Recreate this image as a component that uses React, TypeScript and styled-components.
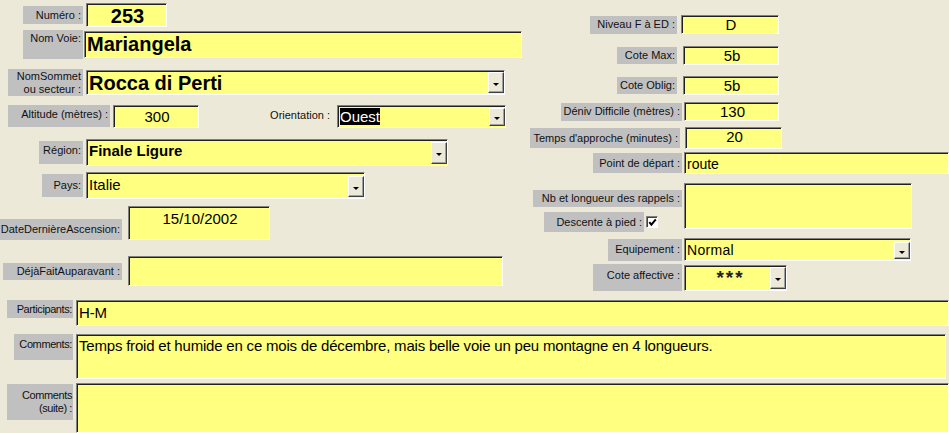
import React from "react";
import styled, { createGlobalStyle, css } from "styled-components";

const GlobalStyle = createGlobalStyle`
  html, body { margin: 0; padding: 0; background: #ece9d8; }
  body { overflow: hidden; }
`;

const Form = styled.div`
  width: 949px;
  height: 433px;
  overflow: hidden;
  display: flex;
  flex-direction: column;
  background: #ece9d8;
  font-family: "Liberation Sans", Arial, sans-serif;
  color: #000;
`;

const Top = styled.div`
  display: flex;
  height: 295px;
`;

const LeftCol = styled.div`
  width: 525px;
  display: flex;
  flex-direction: column;
`;

const RightCol = styled.div`
  flex: 1;
  display: flex;
  flex-direction: column;
`;

const Bottom = styled.div`
  display: flex;
  flex-direction: column;
  margin-top: 8px;
`;

const Row = styled.div<{ $mt?: number; $pl?: number; $align?: string }>`
  display: flex;
  align-items: ${(p) => p.$align ?? "center"};
  margin-top: ${(p) => p.$mt ?? 0}px;
  padding-left: ${(p) => p.$pl ?? 0}px;
  flex-shrink: 0;
`;

const Label = styled.div<{
  $w: number;
  $h: number;
  $ml?: number;
  $mt?: number;
  $pt?: number;
  $center?: boolean;
  $narrow?: boolean;
}>`
  box-sizing: border-box;
  width: ${(p) => p.$w}px;
  height: ${(p) => p.$h}px;
  margin-left: ${(p) => p.$ml ?? 0}px;
  margin-top: ${(p) => p.$mt ?? 0}px;
  flex-shrink: 0;
  background: #c0c0c0;
  display: flex;
  justify-content: flex-end;
  align-items: ${(p) => (p.$center ? "center" : "flex-start")};
  text-align: right;
  padding: ${(p) => (p.$center ? "0 2px" : `${p.$pt ?? 3}px 2px 0`)};
  font-size: 11px;
  line-height: 13px;
  color: #111;
  white-space: pre-line;
  ${(p) =>
    p.$narrow &&
    css`
      letter-spacing: -0.4px;
      padding-right: 1px;
    `}
`;

const PlainLabel = styled.div<{ $w: number; $ml?: number }>`
  width: ${(p) => p.$w}px;
  margin-left: ${(p) => p.$ml ?? 0}px;
  flex-shrink: 0;
  text-align: right;
  font-size: 11px;
  line-height: 13px;
  color: #111;
  padding-top: 4px;
`;

const Field = styled.div<{
  $w: number;
  $h: number;
  $ml?: number;
  $pt?: number;
  $size?: number;
  $bold?: boolean;
  $narrow?: boolean;
}>`
  box-sizing: border-box;
  width: ${(p) => p.$w}px;
  height: ${(p) => p.$h}px;
  margin-left: ${(p) => p.$ml ?? 0}px;
  flex-shrink: 0;
  background: #ffff80;
  border-top: 1px solid #808080;
  border-left: 1px solid #808080;
  border-bottom: 1px solid #ffffff;
  border-right: 1px solid #ffffff;
  box-shadow: inset 1px 1px 0 #202020;
  display: flex;
  align-items: flex-start;
  padding: ${(p) => p.$pt ?? 1}px 0 0 2px;
  font-size: ${(p) => p.$size ?? 14}px;
  font-weight: ${(p) => (p.$bold ? 700 : 400)};
  line-height: 1.15;
  color: #000;
  overflow: hidden;
  white-space: nowrap;
  ${(p) =>
    p.$narrow &&
    css`
      letter-spacing: -0.2px;
    `}
`;

const Value = styled.span<{ $center?: boolean; $spaced?: boolean }>`
  flex: 1;
  text-align: ${(p) => (p.$center ? "center" : "left")};
  letter-spacing: ${(p) => (p.$spaced ? "0.3px" : "inherit")};
`;

const Selected = styled.span`
  background: #000;
  color: #fff;
`;

const DropButton = styled.div`
  box-sizing: border-box;
  width: 16px;
  align-self: stretch;
  margin-bottom: 1px;
  flex-shrink: 0;
  background: #ece9d8;
  border-top: 1px solid #ffffff;
  border-left: 1px solid #ffffff;
  border-bottom: 1px solid #404040;
  border-right: 1px solid #404040;
  box-shadow: inset -1px -1px 0 #a0a0a0;
  display: flex;
  align-items: center;
  justify-content: center;
`;

const Arrow = styled.span`
  width: 0;
  height: 0;
  margin-top: 3px;
  border-left: 3px solid transparent;
  border-right: 3px solid transparent;
  border-top: 3px solid #000;
`;

const LabelStack = styled.div<{ $w: number }>`
  width: ${(p) => p.$w}px;
  flex-shrink: 0;
  display: flex;
  flex-direction: column;
  align-items: flex-end;
`;

const CheckRow = styled.div`
  display: flex;
  align-items: center;
  margin-top: 5px;
  margin-right: 24px;
`;

const CheckBox = styled.div`
  box-sizing: border-box;
  width: 12px;
  height: 12px;
  margin-left: 2px;
  background: #fff;
  border-top: 1px solid #808080;
  border-left: 1px solid #808080;
  border-bottom: 1px solid #fff;
  border-right: 1px solid #fff;
  box-shadow: inset 1px 1px 0 #404040;
  display: flex;
  align-items: center;
  justify-content: center;
`;

const Stars = styled.span`
  flex: 1;
  text-align: center;
  font-family: "Liberation Mono", monospace;
  font-weight: 700;
  font-size: 19px;
  letter-spacing: -2px;
  color: #222;
  padding-top: 2px;
`;

const Combo: React.FC<{ children: React.ReactNode }> = ({ children }) => (
  <>
    {children}
    <DropButton>
      <Arrow />
    </DropButton>
  </>
);

export default function App() {
  return (
    <>
      <GlobalStyle />
      <Form>
        <Top>
          <LeftCol>
            <Row $mt={3} $pl={23}>
              <Label $w={60} $h={18} $center>Numéro :</Label>
              <Field $w={81} $h={24} $ml={3} $size={20} $bold>
                <Value $center>253</Value>
              </Field>
            </Row>
            <Row $mt={3} $pl={23}>
              <Label $w={60} $h={29} $pt={2}>Nom Voie:</Label>
              <Field $w={438} $h={27} $ml={1} $size={20} $bold>
                <Value>Mariangela</Value>
              </Field>
            </Row>
            <Row $mt={10} $pl={8}>
              <Label $w={75} $h={27} $center>{"NomSommet\nou secteur :"}</Label>
              <Field $w={419} $h={25} $ml={3} $size={20} $bold>
                <Combo>
                  <Value>Rocca di Perti</Value>
                </Combo>
              </Field>
            </Row>
            <Row $mt={9} $pl={8} $align="flex-start">
              <Label $w={102} $h={22}>Altitude (mètres) :</Label>
              <Field $w={86} $h={23} $ml={3} $size={15} $pt={2}>
                <Value $center>300</Value>
              </Field>
              <PlainLabel $w={62} $ml={69}>Orientation :</PlainLabel>
              <Field $w={169} $h={23} $ml={7} $size={15} $pt={2}>
                <Combo>
                  <Value>
                    <Selected>Ouest</Selected>
                  </Value>
                </Combo>
              </Field>
            </Row>
            <Row $mt={11} $pl={39}>
              <Label $w={44} $h={23}>Région:</Label>
              <Field $w={362} $h={27} $ml={3} $size={15} $bold $pt={2}>
                <Combo>
                  <Value>Finale Ligure</Value>
                </Combo>
              </Field>
            </Row>
            <Row $mt={6} $pl={42}>
              <Label $w={41} $h={23} $center>Pays:</Label>
              <Field $w={279} $h={27} $ml={3} $size={15} $pt={3}>
                <Combo>
                  <Value>Italie</Value>
                </Combo>
              </Field>
            </Row>
            <Row $mt={7} $pl={0} $align="flex-end">
              <Label $w={122} $h={21} $center>DateDernièreAscension:</Label>
              <Field $w={142} $h={34} $ml={6} $size={15} $pt={3}>
                <Value $center>15/10/2002</Value>
              </Field>
            </Row>
            <Row $mt={16} $pl={3}>
              <Label $w={119} $h={17} $center>DéjàFaitAuparavant :</Label>
              <Field $w={375} $h={30} $ml={6} />
            </Row>
          </LeftCol>

          <RightCol>
            <Row $mt={15} $pl={65}>
              <Label $w={87} $h={18} $center>Niveau F à ED :</Label>
              <Field $w={98} $h={19} $ml={4} $size={15} $pt={0}>
                <Value $center>D</Value>
              </Field>
            </Row>
            <Row $mt={12} $pl={92}>
              <Label $w={60} $h={17} $center>Cote Max:</Label>
              <Field $w={96} $h={19} $ml={6} $size={15} $pt={0}>
                <Value $center>5b</Value>
              </Field>
            </Row>
            <Row $mt={11} $pl={92}>
              <Label $w={60} $h={17} $center>Cote Oblig:</Label>
              <Field $w={96} $h={19} $ml={6} $size={15} $pt={0}>
                <Value $center>5b</Value>
              </Field>
            </Row>
            <Row $mt={7} $pl={36}>
              <Label $w={121} $h={18} $center>Déniv Difficile (mètres) :</Label>
              <Field $w={95} $h={19} $ml={2} $size={15} $pt={0}>
                <Value $center>130</Value>
              </Field>
            </Row>
            <Row $mt={6} $pl={5}>
              <Label $w={150} $h={20} $center>Temps d'approche (minutes) :</Label>
              <Field $w={97} $h={22} $ml={5} $size={15} $pt={0}>
                <Value $center>20</Value>
              </Field>
            </Row>
            <Row $mt={3} $pl={68}>
              <Label $w={89} $h={20} $center>Point de départ :</Label>
              <Field $w={265} $h={22} $ml={2} $size={14} $pt={3}>
                <Value>route</Value>
              </Field>
            </Row>
            <Row $mt={9} $pl={8} $align="flex-start">
              <LabelStack $w={149}>
                <Label $w={149} $h={17} $mt={7} $center>Nb et longueur des rappels :</Label>
                <CheckRow>
                  <Label $w={100} $h={20} $center>Descente à pied :</Label>
                  <CheckBox>
                    <svg width="9" height="9" viewBox="0 0 9 9">
                      <path d="M1.3 4.2 L3.4 6.6 L7.8 1.4" stroke="#000" strokeWidth="2" fill="none" />
                    </svg>
                  </CheckBox>
                </CheckRow>
              </LabelStack>
              <Field $w={228} $h={46} $ml={2} />
            </Row>
            <Row $mt={6} $pl={83}>
              <Label $w={74} $h={22} $center>Equipement :</Label>
              <Field $w={227} $h={23} $ml={2} $size={14} $pt={3}>
                <Combo>
                  <Value $spaced>Normal</Value>
                </Combo>
              </Field>
            </Row>
            <Row $mt={3} $pl={68}>
              <Label $w={89} $h={27} $pt={5}>Cote affective :</Label>
              <Field $w={103} $h={26} $ml={2}>
                <Combo>
                  <Stars>***</Stars>
                </Combo>
              </Field>
            </Row>
          </RightCol>
        </Top>

        <Bottom>
          <Row $pl={7} $align="flex-start">
            <Label $w={66} $h={18} $center $narrow>Participants:</Label>
            <Field $w={873} $h={26} $ml={3} $size={15} $pt={3} $narrow>
              <Value>H-M</Value>
            </Field>
          </Row>
          <Row $mt={8} $pl={14} $align="flex-start">
            <Label $w={59} $h={26} $pt={4} $narrow>Comments:</Label>
            <Field $w={870} $h={45} $ml={3} $size={15} $pt={2} $narrow>
              <Value>Temps froid et humide en ce mois de décembre, mais belle voie un peu montagne en 4 longueurs.</Value>
            </Field>
          </Row>
          <Row $mt={4} $pl={7} $align="flex-start">
            <Label $w={66} $h={36} $mt={1} $center $narrow>{"Comments\n(suite) :"}</Label>
            <Field $w={873} $h={50} $ml={3} $narrow />
          </Row>
        </Bottom>
      </Form>
    </>
  );
}
